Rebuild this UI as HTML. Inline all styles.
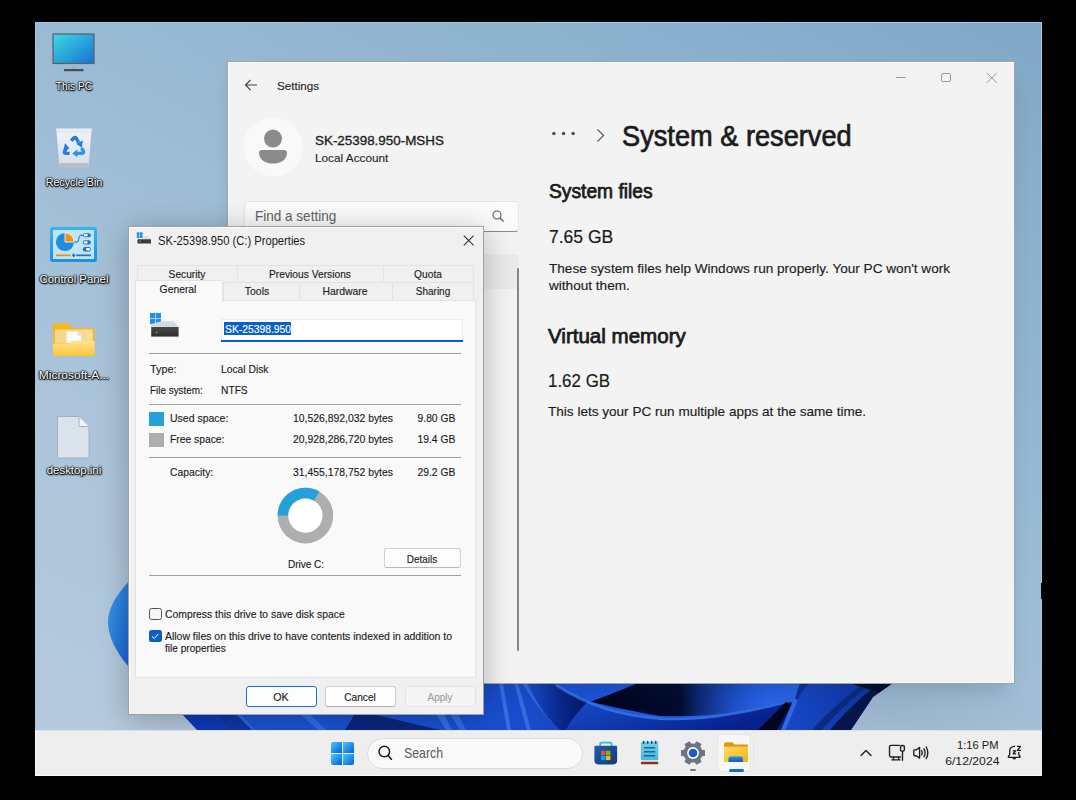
<!DOCTYPE html>
<html><head><meta charset="utf-8">
<style>
*{margin:0;padding:0;box-sizing:border-box}
html,body{width:1076px;height:800px;overflow:hidden;background:#000;font-family:"Liberation Sans",sans-serif;position:relative}
.a{position:absolute}
.t{position:absolute;white-space:nowrap;line-height:1}
svg.a{overflow:visible}
.dt{color:#fff;text-shadow:-1px 0 1px rgba(0,0,0,.7),1px 0 1px rgba(0,0,0,.7),0 -1px 1px rgba(0,0,0,.5),0 1px 1px #000,1px 1px 2px #000}
</style></head><body>
<div class="a" id="desk" style="left:35px;top:22px;width:1007.00px;height:754.00px;background:linear-gradient(208deg,#7fa8c6 0%,#8db3cf 22%,#9dbcd5 46%,#acc5da 72%,#b7cbdd 100%);border-top:1px solid #a3c6e2;border-left:1px solid #a3c6e2;border-right:1px solid #a9c9e3"></div>
<div class="a" style="left:1041px;top:583px;width:1.00px;height:16.00px;background:#000"></div>
<div class="a" style="left:820px;top:660px;width:220.00px;height:80.00px;background:radial-gradient(ellipse at 30% 60%, rgba(70,90,120,.14) 0%, rgba(70,90,120,0) 70%)"></div>
<svg class="a" style="left:0px;top:0px" width="1076" height="800" viewBox="0 0 1076 800"><defs>
<linearGradient id="bl1" x1="0" y1="0" x2="1" y2="1"><stop offset="0" stop-color="#3c9ce8"/><stop offset="1" stop-color="#1a62d4"/></linearGradient>
<linearGradient id="bb1" x1="0" y1="0" x2="1" y2="0"><stop offset="0" stop-color="#1c55d8"/><stop offset="0.45" stop-color="#1a4fd2"/><stop offset="1" stop-color="#0a2480"/></linearGradient>
<linearGradient id="bb2" x1="0" y1="0" x2="1" y2="0"><stop offset="0" stop-color="#01041a"/><stop offset="0.5" stop-color="#020a30"/><stop offset="1" stop-color="#1a50d6" stop-opacity="0"/></linearGradient>
<linearGradient id="bb3" x1="0" y1="0" x2="1" y2="0.3"><stop offset="0" stop-color="#1a4ed2"/><stop offset="0.6" stop-color="#1f58dc"/><stop offset="1" stop-color="#2a64e6"/></linearGradient>
<linearGradient id="bb4" x1="0" y1="0" x2="1" y2="0"><stop offset="0" stop-color="#1a50d6"/><stop offset="0.5" stop-color="#1544c0"/><stop offset="1" stop-color="#0d2f90"/></linearGradient>
<linearGradient id="bb5" x1="0" y1="0" x2="1" y2="0.6"><stop offset="0" stop-color="#1f58dc"/><stop offset="0.5" stop-color="#1240b8"/><stop offset="1" stop-color="#07208a"/></linearGradient>
<linearGradient id="bb6" x1="0" y1="0" x2="1" y2="0"><stop offset="0" stop-color="#1a4ed0"/><stop offset="0.5" stop-color="#0a2a90"/><stop offset="1" stop-color="#041660"/></linearGradient>
<clipPath id="bclip"><path d="M150 683 L893 683 L873 697 L851 730 L197 730 L182 714 Z"/></clipPath>
</defs>
<path d="M128 582 C116 596 108 608 108 622 C108 636 116 652 128 666 Z" fill="url(#bl1)"/>
<g clip-path="url(#bclip)">
<rect x="150" y="683" width="750" height="50" fill="url(#bb1)"/>
<path d="M182 714 L215 714 L232 730 L197 730 Z" fill="#0d3ab8"/><path d="M215 714 L222 714 L238 730 L232 730 Z" fill="#0a2a8c" opacity=".7"/><path d="M222 714 L236 714 L252 730 L238 730 Z" fill="#0c2f9a" opacity=".8"/><path d="M236 714 L240 714 L256 730 L252 730 Z" fill="#3a78ec" opacity=".5"/>
<path d="M300 714 L318 730 L326 730 L310 714 Z" fill="#3f7ff0" opacity=".6"/>
<path d="M345 730 L440 730 L372 714 L355 714 Z" fill="#061a60" opacity=".75"/>
<path d="M436 714 L446 730 L452 730 L444 714 Z" fill="#4a8af5" opacity=".55"/>
<path d="M450 714 L460 730 L466 730 L458 714 Z" fill="#4a8af5" opacity=".5"/>
<path d="M499 683 L507 730 L511 730 L503 683 Z" fill="#4a88f4" opacity=".6"/>
<path d="M514 683 L527 730 L531 730 L518 683 Z" fill="#4a88f4" opacity=".55"/>
<path d="M522 683 C532 700 545 716 560 730 L566 730 C551 716 537 700 527 683 Z" fill="#4a8af5" opacity=".5"/>
<path d="M550 683 C575 697 610 712 660 717 C700 720 740 712 795 698 L795 730 L560 730 C545 716 535 700 527 683 Z" fill="url(#bb5)"/>
<path d="M527 683 L800 683 L795 698 C740 712 700 720 660 717 C610 712 575 697 550 683 Z" fill="url(#bb3)"/>
<path d="M527 683 L552 683 C562 690 574 696 588 701 C578 712 570 721 566 730 L560 730 C545 716 535 700 527 683 Z" fill="url(#bb6)"/>
<path d="M590 702 C612 694 628 687 638 683 L770 683 L770 708 C730 715 690 717 660 716 C635 712 610 706 590 702 Z" fill="url(#bb2)"/>
<path d="M660 717 C700 720 740 712 795 698 L795 701 C740 716 700 722 660 720 C620 717 585 706 555 686 L557 684 C588 704 622 714 660 717 Z" fill="#3a78f0" opacity=".8"/>
<path d="M786 702 L792 704 L777 730 L758 730 Z" fill="#020720"/>
<path d="M794 698 L798 700 L786 730 L781 730 Z" fill="#2f6ae6"/>
<path d="M720 683 L893 683 L873 697 L851 730 L786 730 L798 700 C800 692 806 686 812 683 Z" fill="url(#bb4)"/>
<path d="M830 730 C845 712 862 696 880 683 L893 683 L873 697 L851 730 Z" fill="#06154a"/>
<path d="M812 730 C828 712 845 697 865 683 L872 683 C852 698 836 714 822 730 Z" fill="#0a2a7a" opacity=".9"/>
<path d="M850 683 L893 683 L880 692 C870 690 860 687 850 683 Z" fill="#030a2a"/>
</g></svg>
<svg class="a" style="left:52px;top:33px" width="43" height="39" viewBox="0 0 43 39"><defs><linearGradient id="pc" x1="0" y1="0" x2="1" y2="1"><stop offset="0" stop-color="#40d8e4"/><stop offset="1" stop-color="#1573d0"/></linearGradient></defs>
<rect x="1" y="1" width="41" height="29.5" fill="url(#pc)" stroke="#5b5f66" stroke-width="1.2"/>
<rect x="19" y="31" width="6" height="6" fill="#a9b0b8"/>
<rect x="12" y="36" width="19.5" height="2.2" fill="#4a4d52"/></svg>
<div class="t dt" style="left:-126.30px;width:400px;text-align:center;top:81.00px;font-size:11.8px;color:#fff;transform:scaleX(0.8698);transform-origin:50% 0;">This PC</div>
<svg class="a" style="left:55px;top:127px" width="38" height="43" viewBox="0 0 38 43"><defs><linearGradient id="rb" x1="0" y1="0" x2="0" y2="1"><stop offset="0" stop-color="#f4f7fa"/><stop offset="1" stop-color="#d9e0e7"/></linearGradient></defs>
<path d="M1.5 3 L36.5 3 L33.5 40.5 L4.5 40.5 Z" fill="url(#rb)" opacity=".95"/>
<path d="M1 1.5 L37 1.5 L36.6 5 L1.4 5 Z" fill="#e9eef3" stroke="#cfd6dd" stroke-width=".6"/>
<rect x="4.3" y="36" width="29.2" height="5" fill="#b7bec6"/>
<g stroke-linecap="butt" fill="none" stroke-width="3.4">
<path d="M16.2 13.8 L19 10.8 Q20 9.8 21 11 L23.6 15.3" stroke="#1f7fdc"/>
<path d="M26.6 21 L28.4 24.2 Q29 25.6 27.6 26.2 L21.8 26.4" stroke="#2a95ea"/>
<path d="M14.6 26.4 L10.3 26.2 Q8.9 25.8 9.5 24.4 L12.2 19.8" stroke="#1f7fdc"/>
</g>
<g fill="#1f7fdc"><path d="M21.2 16.8 L27.8 13.6 L26.8 20.8 Z"/><path d="M22.3 22.6 L17.3 26.4 L22.3 30.2 Z" fill="#2a95ea"/><path d="M14.6 21.6 L10 16.2 L8.4 22.8 Z"/></g></svg>
<div class="t dt" style="left:-126.40px;width:400px;text-align:center;top:177.00px;font-size:11.8px;color:#fff;transform:scaleX(0.9101);transform-origin:50% 0;">Recycle Bin</div>
<svg class="a" style="left:49px;top:226px" width="49" height="37" viewBox="0 0 49 37"><defs><linearGradient id="cpf" x1="0" y1="0" x2="0" y2="1"><stop offset="0" stop-color="#34b6f0"/><stop offset="1" stop-color="#1b90e4"/></linearGradient></defs>
<rect x="1" y="1" width="47" height="35" rx="3" fill="url(#cpf)"/>
<rect x="4" y="4" width="41" height="29" fill="#c0e4f6"/>
<circle cx="16" cy="16" r="9.1" fill="#1e8ee0"/>
<path d="M16 6.9 A9.1 9.1 0 0 1 25.1 16 L16 16 Z" fill="#f39212" stroke="#fff" stroke-width="0.8"/>
<path d="M25.1 16 L28.5 16 C30 16 29.5 9.3 31.5 9.3 L34 9.3" stroke="#1a5fc0" fill="none" stroke-width="1"/>
<g fill="#1a6fd0"><rect x="33.9" y="7.2" width="7.9" height="4.1" rx="2"/><rect x="33.9" y="14.2" width="7.9" height="4.3" rx="2.1"/><rect x="33.9" y="21" width="7.9" height="4.5" rx="2.2"/></g>
<g fill="#fff"><rect x="34.8" y="8.1" width="4" height="2.3" rx="1.1"/><rect x="34.8" y="15.2" width="4" height="2.3" rx="1.1"/><rect x="37" y="22" width="4" height="2.5" rx="1.2"/></g>
<rect x="7" y="28.5" width="14.6" height="1.7" fill="#f38a12"/><rect x="27" y="28.5" width="15" height="1.7" fill="#1a6fd0"/><path d="M24.7 26.3 L26.9 29.3 L24.7 32.3 L22.5 29.3 Z" fill="#1a6fd0" stroke="#fff" stroke-width="0.7"/></svg>
<div class="t dt" style="left:-126.10px;width:400px;text-align:center;top:274.00px;font-size:11.8px;color:#fff;transform:scaleX(0.9651);transform-origin:50% 0;">Control Panel</div>
<svg class="a" style="left:52px;top:322px" width="44" height="36" viewBox="0 0 44 36"><defs><linearGradient id="fd" x1="0" y1="0" x2="0" y2="1"><stop offset="0" stop-color="#ffe490"/><stop offset="1" stop-color="#fcc537"/></linearGradient>
<linearGradient id="fdi" x1="0" y1="0" x2="1" y2="0"><stop offset="0" stop-color="#f4d68a"/><stop offset="1" stop-color="#f7dc98"/></linearGradient></defs>
<path d="M1 2.8 Q1 1.3 2.5 1.3 L17.5 1.3 L19.7 6.1 L41 6.1 Q42.5 6.1 42.5 7.6 L42.5 34 L1 34 Z" fill="#f6b818"/>
<rect x="3" y="7.4" width="37.7" height="14" fill="url(#fdi)"/>
<path d="M14.5 9.6 L25.5 9.6 L29.4 13.5 L29.4 21 L14.5 21 Z" fill="#fbfbfb"/>
<path d="M25.5 9.6 L25.5 13.5 L29.4 13.5 Z" fill="#dcdcdc"/>
<path d="M1 23 Q1 21.4 2.6 21.4 L17.5 21.4 L19.7 18.8 L41 18.8 Q42.5 18.8 42.5 20.3 L42.5 32.6 Q42.5 34.1 41 34.1 L2.5 34.1 Q1 34.1 1 32.6 Z" fill="url(#fd)"/></svg>
<div class="t dt" style="left:-126.30px;width:400px;text-align:center;top:370.00px;font-size:11.8px;color:#fff;transform:scaleX(1.0130);transform-origin:50% 0;">Microsoft-A...</div>
<svg class="a" style="left:56px;top:415px" width="35" height="45" viewBox="0 0 35 45"><path d="M1.5 1.5 L23 1.5 L33 11.5 L33 43 L1.5 43 Z" fill="#dae3ec" stroke="#a6b0ba" stroke-width="1"/>
<path d="M23 1.5 L23 11.5 L33 11.5" fill="#eef3f7" stroke="#a6b0ba" stroke-width="1"/></svg>
<div class="t dt" style="left:-126.25px;width:400px;text-align:center;top:465.00px;font-size:11.8px;color:#fff;transform:scaleX(0.9661);transform-origin:50% 0;">desktop.ini</div>
<div class="a" id="set" style="left:227px;top:61px;width:788.00px;height:623.00px;background:#f3f3f3;border:1px solid rgba(30,50,70,.4);box-shadow:0 12px 20px -8px rgba(20,40,70,.22)"></div>
<div class="a" style="left:228px;top:62px;width:786.00px;height:621.00px;border-top:1px solid #fcfcfc;border-left:1px solid #fcfcfc"></div>
<svg class="a" style="left:244px;top:79px" width="14" height="12" viewBox="0 0 14 12"><path d="M1.5 6 L13 6 M6.5 1 L1.5 6 L6.5 11" stroke="#454545" stroke-width="1.1" fill="none"/></svg>
<div class="t " style="left:277.40px;top:80.00px;font-size:11.7px;color:#1f1f1f;-webkit-text-stroke:0.12px #1f1f1f;transform:scaleX(0.9983);transform-origin:0 0;">Settings</div>
<div class="a" style="left:896px;top:76.5px;width:10.00px;height:1.00px;background:#9b9b9b"></div>
<div class="a" style="left:941.3px;top:72.6px;width:9.70px;height:9.90px;border:1.1px solid #9b9b9b;border-radius:2px"></div>
<svg class="a" style="left:986px;top:72px" width="12" height="12" viewBox="0 0 12 12"><path d="M0.8 0.8 L10.8 10.8 M10.8 0.8 L0.8 10.8" stroke="#9b9b9b" stroke-width="1" fill="none"/></svg>
<svg class="a" style="left:243px;top:117px" width="60" height="60" viewBox="0 0 60 60"><circle cx="30" cy="30" r="29.5" fill="#f9f9f9"/><circle cx="30" cy="21.6" r="9" fill="#8b8b8b"/><path d="M16 36 Q16 33 19 33 L41 33 Q44 33 44 36 C44 43 37 46.6 30 46.6 C23 46.6 16 43 16 36 Z" fill="#8b8b8b"/></svg>
<div class="t " id="t_user" style="left:314.60px;top:134.00px;font-size:13.3px;color:#1b1b1b;-webkit-text-stroke:0.32px #1b1b1b;transform:scaleX(1.0079);transform-origin:0 0;">SK-25398.950-MSHS</div>
<div class="t " style="left:314.60px;top:152.00px;font-size:11.7px;color:#1f1f1f;-webkit-text-stroke:0.12px #1f1f1f;transform:scaleX(1.0076);transform-origin:0 0;">Local Account</div>
<div class="a" style="left:244px;top:201px;width:274.50px;height:30.50px;background:#fbfbfb;border:1px solid #e6e6e6;border-bottom:1px solid #8a8a8a;border-radius:4px"></div>
<div class="t " style="left:254.80px;top:209.00px;font-size:14.5px;color:#616161;transform:scaleX(0.9329);transform-origin:0 0;">Find a setting</div>
<svg class="a" style="left:492px;top:210px" width="13" height="13" viewBox="0 0 13 13"><circle cx="5" cy="5" r="4" stroke="#555" stroke-width="1.1" fill="none"/><path d="M8 8 L11.5 11.5" stroke="#555" stroke-width="1.2"/></svg>
<div class="a" style="left:244px;top:253.6px;width:274.50px;height:35.00px;background:#eaeaea;border-radius:4px"></div>
<div class="a" style="left:516.5px;top:267.6px;width:2.10px;height:383.00px;background:#868686;border-radius:1px"></div>
<svg class="a" style="left:550px;top:130px" width="28" height="8" viewBox="0 0 28 8"><circle cx="3.9" cy="3.6" r="1.75" fill="#505050"/><circle cx="13.5" cy="3.6" r="1.75" fill="#505050"/><circle cx="23.1" cy="3.6" r="1.75" fill="#505050"/></svg>
<svg class="a" style="left:595px;top:128px" width="12" height="16" viewBox="0 0 12 16"><path d="M2.5 1.5 L8.5 7.5 L2.5 13.5" stroke="#5f5f5f" stroke-width="1.3" fill="none"/></svg>
<div class="t " id="t_title" style="left:622.20px;top:122.00px;font-size:28.7px;color:#1b1b1b;-webkit-text-stroke:0.69px #1b1b1b;transform:scaleX(0.9479);transform-origin:0 0;">System &amp; reserved</div>
<div class="t " id="t_sf" style="left:548.70px;top:182.00px;font-size:19.6px;color:#1b1b1b;-webkit-text-stroke:0.75px #1b1b1b;transform:scaleX(0.9816);transform-origin:0 0;">System files</div>
<div class="t " id="t_765" style="left:549.10px;top:227.00px;font-size:19px;color:#1b1b1b;-webkit-text-stroke:0.20px #1b1b1b;transform:scaleX(0.9224);transform-origin:0 0;">7.65 GB</div>
<div class="t " id="t_p1" style="left:548.60px;top:262.00px;font-size:13.6px;color:#1b1b1b;-webkit-text-stroke:0.15px #1b1b1b;transform:scaleX(0.9994);transform-origin:0 0;">These system files help Windows run properly. Your PC won't work</div>
<div class="t " id="t_p1b" style="left:548.60px;top:279.00px;font-size:13.6px;color:#1b1b1b;-webkit-text-stroke:0.15px #1b1b1b;transform:scaleX(0.9994);transform-origin:0 0;">without them.</div>
<div class="t " id="t_vm" style="left:548.40px;top:327.00px;font-size:19.6px;color:#1b1b1b;-webkit-text-stroke:0.75px #1b1b1b;transform:scaleX(1.0485);transform-origin:0 0;">Virtual memory</div>
<div class="t " id="t_162" style="left:548.30px;top:371.00px;font-size:19px;color:#1b1b1b;-webkit-text-stroke:0.20px #1b1b1b;transform:scaleX(0.8909);transform-origin:0 0;">1.62 GB</div>
<div class="t " id="t_p2" style="left:548.40px;top:405.00px;font-size:13.6px;color:#1b1b1b;-webkit-text-stroke:0.15px #1b1b1b;transform:scaleX(0.9976);transform-origin:0 0;">This lets your PC run multiple apps at the same time.</div>
<div class="a" id="dlg" style="left:128px;top:226px;width:356.00px;height:489.00px;background:#f0f0f0;border:1px solid #9aa3ab;box-shadow:0 4px 28px rgba(0,0,0,.26)"></div>
<svg class="a" style="left:136px;top:231px" width="16" height="14" viewBox="0 0 16 14"><g fill="#1a8ee8"><rect x="0.8" y="1.3" width="2.7" height="2.7" rx=".4"/><rect x="3.9" y="1.3" width="2.7" height="2.7" rx=".4"/><rect x="0.8" y="4.3" width="2.7" height="2.7" rx=".4"/><rect x="3.9" y="4.3" width="2.7" height="2.7" rx=".4"/></g><path d="M7 5.5 L12.5 5.5 L14.8 8.3 L7 8.3 Z" fill="#d8dde2"/><rect x="1.5" y="8.3" width="13.5" height="4.2" rx=".6" fill="#3a3a3a"/><rect x="3" y="9.8" width="1.6" height="1" fill="#3ccf3c"/></svg>
<div class="a" style="left:129px;top:227px;width:354.00px;height:487.00px;border-top:1px solid #fbfbfb;border-left:1px solid #fbfbfb"></div>
<div class="t " id="t_dtitle" style="left:158.00px;top:235.00px;font-size:12.7px;color:#1b1b1b;transform:scaleX(0.8805);transform-origin:0 0;">SK-25398.950 (C:) Properties</div>
<svg class="a" style="left:463px;top:235px" width="12" height="12" viewBox="0 0 12 12"><path d="M0.8 0.6 L10.6 10.4 M10.6 0.6 L0.8 10.4" stroke="#333" stroke-width="1.1" fill="none"/></svg>
<div class="a" style="left:137px;top:264.7px;width:100.00px;height:18.30px;background:#f0f0f0;border:1px solid #e3e3e3;border-right:none"></div>
<div class="a" style="left:236.7px;top:264.7px;width:146.30px;height:18.30px;background:#f0f0f0;border:1px solid #e3e3e3;border-right:none"></div>
<div class="a" style="left:382.6px;top:264.7px;width:91.40px;height:18.30px;background:#f0f0f0;border:1px solid #e3e3e3;"></div>
<div class="a" style="left:222.7px;top:282.4px;width:76.30px;height:18.60px;background:#f0f0f0;border:1px solid #e3e3e3;border-right:none"></div>
<div class="a" style="left:298.6px;top:282.4px;width:93.40px;height:18.60px;background:#f0f0f0;border:1px solid #e3e3e3;border-right:none"></div>
<div class="a" style="left:391.5px;top:282.4px;width:82.50px;height:18.60px;background:#f0f0f0;border:1px solid #e3e3e3;"></div>
<div class="a" id="panel" style="left:135px;top:300px;width:340.50px;height:377.50px;background:#f9f9f9;border:1px solid #e3e3e3"></div>
<div class="a" style="left:135.4px;top:280px;width:87.60px;height:21.50px;background:#f9f9f9;border:1px solid #e3e3e3;border-bottom:none"></div>
<div class="t " id="t_sec" style="left:-13.45px;width:400px;text-align:center;top:269.00px;font-size:11.8px;color:#1b1b1b;-webkit-text-stroke:0.15px #1b1b1b;transform:scaleX(0.8634);transform-origin:50% 0;">Security</div>
<div class="t " style="left:110.20px;width:400px;text-align:center;top:269.00px;font-size:11.8px;color:#1b1b1b;-webkit-text-stroke:0.15px #1b1b1b;transform:scaleX(0.8683);transform-origin:50% 0;">Previous Versions</div>
<div class="t " style="left:227.90px;width:400px;text-align:center;top:269.00px;font-size:11.8px;color:#1b1b1b;-webkit-text-stroke:0.15px #1b1b1b;transform:scaleX(0.8649);transform-origin:50% 0;">Quota</div>
<div class="t " style="left:-21.80px;width:400px;text-align:center;top:284.00px;font-size:11.8px;color:#1b1b1b;-webkit-text-stroke:0.15px #1b1b1b;transform:scaleX(0.8767);transform-origin:50% 0;">General</div>
<div class="t " style="left:57.30px;width:400px;text-align:center;top:286.00px;font-size:11.8px;color:#1b1b1b;-webkit-text-stroke:0.15px #1b1b1b;transform:scaleX(0.8858);transform-origin:50% 0;">Tools</div>
<div class="t " style="left:144.60px;width:400px;text-align:center;top:286.00px;font-size:11.8px;color:#1b1b1b;-webkit-text-stroke:0.15px #1b1b1b;transform:scaleX(0.8837);transform-origin:50% 0;">Hardware</div>
<div class="t " style="left:232.95px;width:400px;text-align:center;top:286.00px;font-size:11.8px;color:#1b1b1b;-webkit-text-stroke:0.15px #1b1b1b;transform:scaleX(0.8483);transform-origin:50% 0;">Sharing</div>
<svg class="a" style="left:149px;top:312px" width="31" height="26" viewBox="0 0 31 26"><g fill="#1f8fe8"><rect x="1" y="1" width="5.2" height="5.2"/><rect x="6.8" y="1" width="5.2" height="5.2"/><rect x="1" y="6.8" width="5.2" height="5.2"/><rect x="6.8" y="6.8" width="5.2" height="5.2"/></g>
<defs><linearGradient id="hd" x1="0" y1="0" x2="0" y2="1"><stop offset="0" stop-color="#4a4a4a"/><stop offset="1" stop-color="#2e2e2e"/></linearGradient></defs>
<path d="M12.5 9.3 L25 9.3 L29.5 15 L2.2 15 L2.2 12 Z" fill="#d7dadd"/>
<rect x="2.2" y="15" width="27.4" height="9.6" fill="url(#hd)"/>
<circle cx="7.6" cy="20.4" r="0.9" fill="#3ad13a"/></svg>
<div class="a" style="left:221px;top:319.4px;width:241.50px;height:22.60px;background:#fff;border:1px solid #ececec;border-bottom:none"></div>
<div class="a" style="left:221px;top:340px;width:241.50px;height:2.00px;background:#0a5fc4"></div>
<div class="a" style="left:224px;top:322px;width:67.20px;height:12.80px;background:#0a5fc8"></div>
<div class="t " id="t_edit" style="left:224.60px;top:324.00px;font-size:11.8px;color:#fff;-webkit-text-stroke:0.15px #fff;transform:scaleX(0.8748);transform-origin:0 0;">SK-25398.950</div>
<div class="a" style="left:149.2px;top:352.6px;width:311.60px;height:1.00px;background:#a0a0a0"></div>
<div class="a" style="left:149.2px;top:404.2px;width:311.60px;height:1.00px;background:#a0a0a0"></div>
<div class="a" style="left:149.2px;top:457px;width:311.60px;height:1.00px;background:#a0a0a0"></div>
<div class="a" style="left:149.2px;top:574.8px;width:311.60px;height:1.00px;background:#a0a0a0"></div>
<div class="t " style="left:149.50px;top:364.00px;font-size:11.8px;color:#1b1b1b;-webkit-text-stroke:0.15px #1b1b1b;transform:scaleX(0.9148);transform-origin:0 0;">Type:</div>
<div class="t " style="left:221.30px;top:364.00px;font-size:11.8px;color:#1b1b1b;-webkit-text-stroke:0.15px #1b1b1b;transform:scaleX(0.8727);transform-origin:0 0;">Local Disk</div>
<div class="t " style="left:149.50px;top:385.00px;font-size:11.8px;color:#1b1b1b;-webkit-text-stroke:0.15px #1b1b1b;transform:scaleX(0.8389);transform-origin:0 0;">File system:</div>
<div class="t " style="left:221.30px;top:385.00px;font-size:11.8px;color:#1b1b1b;-webkit-text-stroke:0.15px #1b1b1b;transform:scaleX(0.8667);transform-origin:0 0;">NTFS</div>
<div class="a" style="left:149.2px;top:412.3px;width:14.70px;height:13.50px;background:#26a0da"></div>
<div class="t " style="left:170.00px;top:413.00px;font-size:11.8px;color:#1b1b1b;-webkit-text-stroke:0.15px #1b1b1b;transform:scaleX(0.8889);transform-origin:0 0;">Used space:</div>
<div class="t " id="t_b1" style="left:293.40px;top:413.00px;font-size:11.8px;color:#1b1b1b;-webkit-text-stroke:0.15px #1b1b1b;transform:scaleX(0.8811);transform-origin:0 0;">10,526,892,032 bytes</div>
<div class="t " style="right:620.70px;top:413.00px;font-size:11.8px;color:#1b1b1b;-webkit-text-stroke:0.15px #1b1b1b;transform:scaleX(0.8708);transform-origin:100% 0;">9.80 GB</div>
<div class="a" style="left:149.2px;top:432.8px;width:14.70px;height:13.80px;background:#aeaeae"></div>
<div class="t " style="left:170.00px;top:434.00px;font-size:11.8px;color:#1b1b1b;-webkit-text-stroke:0.15px #1b1b1b;transform:scaleX(0.8732);transform-origin:0 0;">Free space:</div>
<div class="t " style="left:293.40px;top:434.00px;font-size:11.8px;color:#1b1b1b;-webkit-text-stroke:0.15px #1b1b1b;transform:scaleX(0.8811);transform-origin:0 0;">20,928,286,720 bytes</div>
<div class="t " style="right:620.70px;top:434.00px;font-size:11.8px;color:#1b1b1b;-webkit-text-stroke:0.15px #1b1b1b;transform:scaleX(0.8708);transform-origin:100% 0;">19.4 GB</div>
<div class="t " style="left:169.80px;top:467.00px;font-size:11.8px;color:#1b1b1b;-webkit-text-stroke:0.15px #1b1b1b;transform:scaleX(0.8783);transform-origin:0 0;">Capacity:</div>
<div class="t " style="left:293.40px;top:467.00px;font-size:11.8px;color:#1b1b1b;-webkit-text-stroke:0.15px #1b1b1b;transform:scaleX(0.8811);transform-origin:0 0;">31,455,178,752 bytes</div>
<div class="t " style="right:620.70px;top:467.00px;font-size:11.8px;color:#1b1b1b;-webkit-text-stroke:0.15px #1b1b1b;transform:scaleX(0.8708);transform-origin:100% 0;">29.2 GB</div>
<svg class="a" style="left:277px;top:487px" width="57" height="57" viewBox="0 0 57 57"><circle cx="28.4" cy="28.6" r="22.4" fill="none" stroke="#aeaeae" stroke-width="10.8"/>
<path d="M6 28.6 A22.4 22.4 0 0 1 39.6 9.2" fill="none" stroke="#26a0da" stroke-width="10.8"/>
<circle cx="28.4" cy="28.6" r="17" fill="#fff"/></svg>
<div class="t " id="t_drive" style="left:106.35px;width:400px;text-align:center;top:559.00px;font-size:11.8px;color:#1b1b1b;-webkit-text-stroke:0.15px #1b1b1b;transform:scaleX(0.8472);transform-origin:50% 0;">Drive C:</div>
<div class="a" style="left:384.3px;top:548.3px;width:77.10px;height:20.10px;background:#fdfdfd;border:1px solid #d0d0d0;border-bottom-color:#b8b8b8;border-radius:3px"></div>
<div class="t " style="left:222.45px;width:400px;text-align:center;top:554.00px;font-size:11.8px;color:#1b1b1b;-webkit-text-stroke:0.15px #1b1b1b;transform:scaleX(0.8401);transform-origin:50% 0;">Details</div>
<div class="a" style="left:149.4px;top:607.5px;width:12.40px;height:12.30px;background:#f5f5f5;border:1px solid #555;border-radius:2.5px"></div>
<div class="t " id="t_cb1" style="left:164.60px;top:609.00px;font-size:11.8px;color:#1b1b1b;-webkit-text-stroke:0.15px #1b1b1b;transform:scaleX(0.8783);transform-origin:0 0;">Compress this drive to save disk space</div>
<div class="a" style="left:149.4px;top:630.2px;width:12.40px;height:12.30px;background:#0f5fc2;border-radius:2.5px"><svg width="12" height="12" style="position:absolute;left:0;top:0"><path d="M3 6.4 L5.2 8.5 L9.4 3.8" stroke="#fff" stroke-width="1" fill="none"/></svg></div>
<div class="t " id="t_cb2" style="left:164.60px;top:631.00px;font-size:11.8px;color:#1b1b1b;-webkit-text-stroke:0.15px #1b1b1b;transform:scaleX(0.8858);transform-origin:0 0;">Allow files on this drive to have contents indexed in addition to</div>
<div class="t " style="left:164.60px;top:643.00px;font-size:11.8px;color:#1b1b1b;-webkit-text-stroke:0.15px #1b1b1b;transform:scaleX(0.8570);transform-origin:0 0;">file properties</div>
<div class="a" style="left:246px;top:686.3px;width:71.20px;height:20.30px;background:#fdfdfd;border:1.5px solid #1a6fd0;border-radius:3px"></div>
<div class="t " style="left:81.10px;width:400px;text-align:center;top:692.00px;font-size:11.8px;color:#1b1b1b;-webkit-text-stroke:0.15px #1b1b1b;transform:scaleX(0.9033);transform-origin:50% 0;">OK</div>
<div class="a" style="left:325.3px;top:686.3px;width:71.20px;height:20.30px;background:#fdfdfd;border:1px solid #d0d0d0;border-bottom-color:#b0b0b0;border-radius:3px"></div>
<div class="t " style="left:160.40px;width:400px;text-align:center;top:692.00px;font-size:11.8px;color:#1b1b1b;-webkit-text-stroke:0.15px #1b1b1b;transform:scaleX(0.8603);transform-origin:50% 0;">Cancel</div>
<div class="a" style="left:405.4px;top:686.3px;width:70.40px;height:20.30px;background:#f5f5f5;border:1px solid #e3e3e3;border-radius:3px"></div>
<div class="t " style="left:239.85px;width:400px;text-align:center;top:692.00px;font-size:11.8px;color:#a0a0a0;-webkit-text-stroke:0.15px #a0a0a0;transform:scaleX(0.8504);transform-origin:50% 0;">Apply</div>
<div class="a" id="task" style="left:35px;top:730px;width:1007.00px;height:46.00px;background:#eeeeee;border-top:1px solid #e0e0e0;border-bottom:1px solid #fafafa;border-left:1px solid #fafafa"></div>
<svg class="a" style="left:330px;top:741px" width="25" height="25" viewBox="0 0 25 25"><defs><linearGradient id="st" x1="0" y1="0" x2="1" y2="1"><stop offset="0" stop-color="#4cc8f8"/><stop offset="1" stop-color="#0060d8"/></linearGradient></defs>
<g fill="url(#st)"><path d="M1 3 Q1 1 3 1 L12 1 L12 12 L1 12 Z"/><path d="M13 1 L22 1 Q24 1 24 3 L24 12 L13 12 Z"/><path d="M1 13 L12 13 L12 24 L3 24 Q1 24 1 22 Z"/><path d="M13 13 L24 13 L24 22 Q24 24 22 24 L13 24 Z"/></g></svg>
<div class="a" style="left:367px;top:737.5px;width:215.50px;height:31.00px;background:#f9f9f9;border:1px solid #dcdcdc;border-radius:16px"></div>
<svg class="a" style="left:376px;top:745px" width="18" height="18" viewBox="0 0 18 18"><circle cx="8.3" cy="6.5" r="5.3" stroke="#1c1c1c" stroke-width="1.5" fill="none"/><path d="M12.2 10.5 L15.4 14.2" stroke="#1c1c1c" stroke-width="1.7" stroke-linecap="round"/></svg>
<div class="t " id="t_search" style="left:403.50px;top:746.00px;font-size:14.2px;color:#5b5b5b;transform:scaleX(0.8669);transform-origin:0 0;">Search</div>
<svg class="a" style="left:593px;top:740px" width="26" height="27" viewBox="0 0 26 27"><defs><linearGradient id="stb" x1="0" y1="0" x2="1" y2="1"><stop offset="0" stop-color="#1f5cb0"/><stop offset="1" stop-color="#123a7a"/></linearGradient></defs>
<path d="M7.2 6.5 L7.2 3.6 Q7.2 2.6 8.2 2.6 L17.6 2.6 Q18.6 2.6 18.6 3.6 L18.6 6.5" stroke="#2fb8f2" stroke-width="1.7" fill="none"/>
<path d="M1.4 6.8 Q1.4 5.7 2.5 5.7 L23 5.7 Q24.1 5.7 24.1 6.8 L24.1 20.5 Q24.1 24.4 20.2 24.4 L5.3 24.4 Q1.4 24.4 1.4 20.5 Z" fill="url(#stb)"/>
<rect x="8" y="10.7" width="4.4" height="4.4" fill="#f25022"/><rect x="13" y="10.7" width="4.4" height="4.4" fill="#7fba00"/><rect x="8" y="15.7" width="4.4" height="4.4" fill="#00a4ef"/><rect x="13" y="15.7" width="4.4" height="4.4" fill="#ffb900"/></svg>
<svg class="a" style="left:640px;top:740px" width="20" height="26" viewBox="0 0 20 26"><defs><linearGradient id="npg" x1="0" y1="0" x2="0" y2="1"><stop offset="0" stop-color="#6fd0f0"/><stop offset="1" stop-color="#4ab6e0"/></linearGradient></defs>
<rect x="0.9" y="2" width="17.4" height="18.2" rx="1.2" fill="url(#npg)"/>
<rect x="0.9" y="21.8" width="17.4" height="2.4" rx="1" fill="#8a3412"/>
<g fill="#1d4f70"><rect x="2.8" y="0.8" width="1.7" height="3.2" rx=".8"/><rect x="6.8" y="0.8" width="1.7" height="3.2" rx=".8"/><rect x="10.8" y="0.8" width="1.7" height="3.2" rx=".8"/><rect x="14.8" y="0.8" width="1.7" height="3.2" rx=".8"/></g>
<g fill="#1b6a8c"><rect x="3.9" y="6.9" width="11.4" height="1.6" rx=".6"/><rect x="3.9" y="11" width="11.4" height="1.6" rx=".6"/><rect x="3.9" y="15" width="11.4" height="1.6" rx=".6"/></g></svg>
<svg class="a" style="left:680px;top:739.6px" width="26" height="26" viewBox="0 0 26 26"><path d="M20.80 8.51 L21.61 10.37 L24.35 10.59 L24.35 15.41 L21.61 15.63 L20.79 17.51 L19.58 19.14 L20.76 21.62 L16.58 24.03 L15.02 21.77 L12.98 22.00 L10.98 21.77 L9.42 24.03 L5.24 21.62 L6.42 19.14 L5.20 17.49 L4.39 15.63 L1.65 15.41 L1.65 10.59 L4.39 10.37 L5.21 8.49 L6.42 6.86 L5.24 4.38 L9.42 1.97 L10.98 4.23 L13.02 4.00 L15.02 4.23 L16.58 1.97 L20.76 4.38 L19.58 6.86 Z" fill="#6b7480" stroke="#6b7480" stroke-width="1.2" stroke-linejoin="round"/><circle cx="13" cy="13" r="5.9" fill="#fff"/><circle cx="13" cy="13" r="4.3" fill="#1a5cc8"/></svg>
<div class="a" style="left:690px;top:769px;width:6.00px;height:2.00px;background:#777;border-radius:1px"></div>
<div class="a" style="left:717px;top:734px;width:37.00px;height:38.00px;background:#f1f1f1;border:1px solid #e6e6e6;border-radius:5px"></div>
<div class="a" style="left:717px;top:734px;width:34.00px;height:38.00px;background:#f7f7f7;border:1px solid #e4e4e4;border-radius:5px"></div>
<svg class="a" style="left:723px;top:741px" width="26" height="23" viewBox="0 0 26 23"><defs><linearGradient id="exg" x1="0" y1="0" x2="1" y2="1"><stop offset="0" stop-color="#ffd968"/><stop offset="1" stop-color="#f5b50e"/></linearGradient><linearGradient id="exb" x1="0" y1="0" x2="0" y2="1"><stop offset="0" stop-color="#2a8ae6"/><stop offset="1" stop-color="#0f5fc4"/></linearGradient></defs>
<path d="M1 3 Q1 1.2 2.8 1.2 L9.5 1.2 L11.5 3.5 L24.3 3.5 Q25 3.5 25 4.2 L25 7 L1 7 Z" fill="#dc9c08"/>
<rect x="1" y="5.6" width="24" height="15.4" fill="url(#exg)"/>
<path d="M5.5 21 L5.5 17.4 Q5.5 15.4 7.5 15.4 L18 15.4 Q20 15.4 20 17.4 L20 21 Z" fill="url(#exb)"/></svg>
<div class="a" style="left:728.5px;top:768.5px;width:15.50px;height:3.00px;background:#0f6bd6;border-radius:1.5px"></div>
<svg class="a" style="left:859px;top:748px" width="14" height="10" viewBox="0 0 14 10"><path d="M2 7.5 L7 2.5 L12 7.5" stroke="#1c1c1c" stroke-width="1.35" fill="none" stroke-linecap="round" stroke-linejoin="round"/></svg>
<svg class="a" style="left:0px;top:0px" width="1076" height="800" viewBox="0 0 1076 800"><g stroke="#1c1c1c" stroke-width="1.35" fill="none" stroke-linecap="round" stroke-linejoin="round">
<path d="M899.3 745.4 H890.9 Q889.5 745.4 889.5 746.8 V755.6 Q889.5 757 890.9 757 H900.5"/>
<path d="M893.6 757.3 L893 759.8 M898.4 757.3 L899 759.8 M891.9 759.9 H900"/>
<rect x="900.5" y="745.5" width="3.9" height="5.6" rx="1.6"/>
<path d="M902.5 751.3 V760.2"/>
<path d="M913.8 750.6 Q913.8 749.9 914.5 749.9 H916.2 L919.6 747.5 V758.1 L916.2 755.7 H914.5 Q913.8 755.7 913.8 755 Z"/>
<path d="M921.6 750.6 Q922.9 752.8 921.6 755"/>
<path d="M923.9 748.8 Q926.3 752.8 923.9 756.8"/>
<path d="M926.2 747 Q929.4 752.8 926.2 758.6"/>
<path d="M1014.6 746.3 Q1010.1 746.5 1009.7 750.7 V754.6 L1008.4 756.6 Q1008.1 757.3 1008.9 757.3 H1019.6 Q1020.4 757.3 1020.1 756.6 L1018.8 754.6 V752.3"/>
<path d="M1012.9 757.8 Q1014.2 759.9 1015.5 757.8"/>
<path d="M1017.4 746.3 H1020.5 L1017.4 750.3 H1020.5"/>
<path d="M1013.2 750.8 H1015.7 L1013.2 753.8 H1015.7"/>
</g></svg>
<div class="t " id="t_time" style="right:77.00px;top:740.00px;font-size:10.9px;color:#1b1b1b;transform:scaleX(1.0249);transform-origin:100% 0;">1:16 PM</div>
<div class="t " id="t_date" style="right:77.00px;top:756.00px;font-size:10.9px;color:#1b1b1b;transform:scaleX(1.1199);transform-origin:100% 0;">6/12/2024</div>
</body></html>
